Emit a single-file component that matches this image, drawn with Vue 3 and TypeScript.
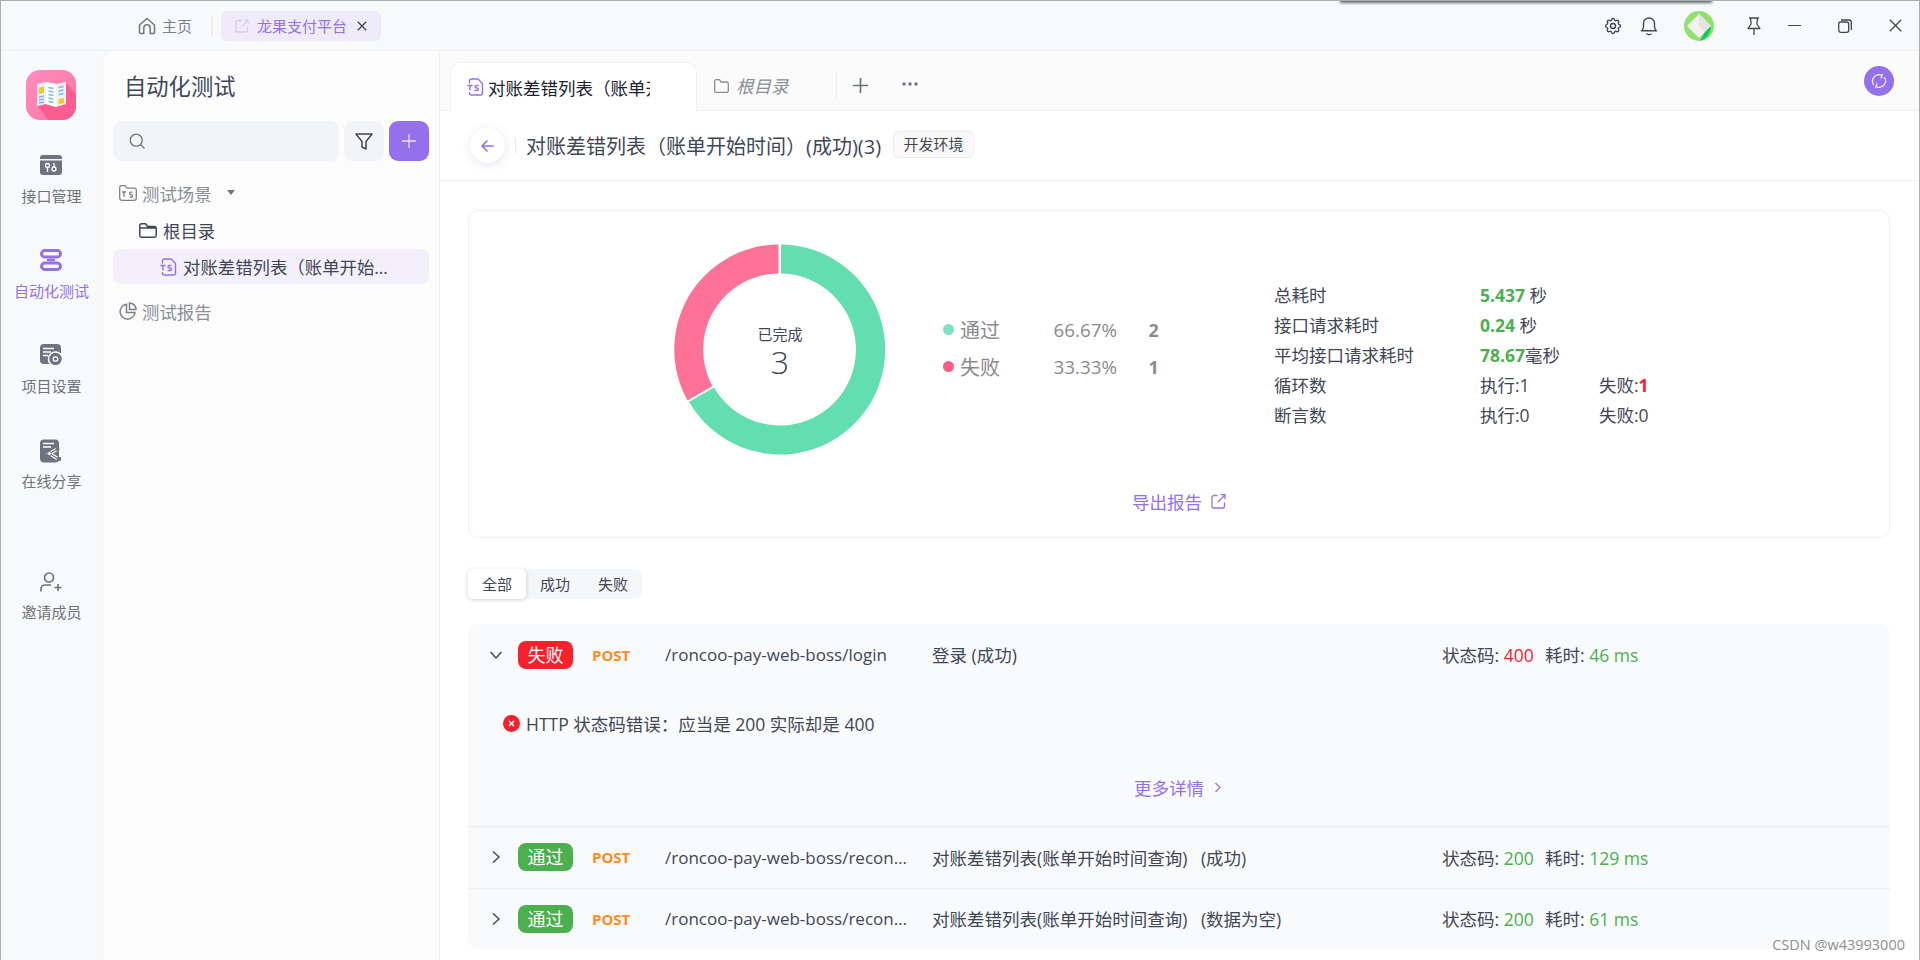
<script setup lang="ts">
interface ApiRow {
  state: string
  ok: boolean
  path: string
  name: string
  code: number
  time: string
}

const rows: ApiRow[] = [
  { state: '通过', ok: true, path: '/roncoo-pay-web-boss/reconciliation/list', name: '对账差错列表(账单开始时间查询)   (成功)', code: 200, time: '129 ms' },
  { state: '通过', ok: true, path: '/roncoo-pay-web-boss/reconciliation/list', name: '对账差错列表(账单开始时间查询)   (数据为空)', code: 200, time: '61 ms' },
]

const filters = ['全部', '成功', '失败']
</script>

<template>
  <div class="app">
    <div class="window-shadow"></div>

    <header class="titlebar">
      <div class="home">
        <svg width="18" height="18" viewBox="0 0 18 18" fill="none" stroke="#6f7580" stroke-width="1.5" stroke-linejoin="round">
          <path d="M1.500 8 9 1.500 16.500 8v7.500a1 1 0 0 1-1 1H12.200V11a3.200 3.200 0 0 0-6.400 0v5.500H2.500a1 1 0 0 1-1-1z" />
        </svg>
        <span>主页</span>
      </div>
      <i class="title-sep"></i>
      <div class="project-tab">
        <svg width="14" height="14" viewBox="0 0 14 14" fill="none" stroke="#d5d3e2" stroke-width="1.400">
          <path d="M7 1.500H3a2 2 0 0 0-2 2V11a2 2 0 0 0 2 2h7.500a2 2 0 0 0 2-2V7.500" />
          <path d="M7 7.500 13 1.500M9.500 1h3.500v3.500" />
        </svg>
        <span class="project-name">龙果支付平台</span>
        <svg class="project-close" width="10" height="10" viewBox="0 0 10 10" stroke="#3f4757" stroke-width="1.300">
          <path d="M.8.8l8.400 8.400M9.200.8.800 9.200" />
        </svg>
      </div>

      <div class="title-actions">
        <svg class="tool" width="20" height="20" viewBox="0 0 24 24" fill="none" stroke="#3f4757" stroke-width="1.700" stroke-linejoin="round">
          <path d="M10.325 4.317c.426-1.756 2.924-1.756 3.350 0a1.724 1.724 0 0 0 2.573 1.066c1.543-.94 3.310.826 2.370 2.370a1.724 1.724 0 0 0 1.065 2.572c1.756.426 1.756 2.924 0 3.350a1.724 1.724 0 0 0-1.066 2.573c.94 1.543-.826 3.310-2.370 2.370a1.724 1.724 0 0 0-2.572 1.065c-.426 1.756-2.924 1.756-3.350 0a1.724 1.724 0 0 0-2.573-1.066c-1.543.94-3.310-.826-2.370-2.370a1.724 1.724 0 0 0-1.065-2.572c-1.756-.426-1.756-2.924 0-3.350a1.724 1.724 0 0 0 1.066-2.573c-.94-1.543.826-3.310 2.370-2.370 1 .608 2.296.07 2.572-1.065z" />
          <circle cx="12" cy="12" r="3" />
        </svg>
        <svg class="tool bell" width="18" height="20" viewBox="0 0 18 20" fill="none" stroke="#3f4757" stroke-width="1.400" stroke-linecap="round" stroke-linejoin="round">
          <path d="M1.500 14.800c1.500-1.200 2-2.500 2-4.300V7.500a5.500 5.500 0 0 1 11 0v3c0 1.800.5 3.100 2 4.300z" />
          <path d="M6.800 18c1.300.8 3.100.8 4.400 0" />
        </svg>
        <svg class="avatar" width="30" height="30" viewBox="0 0 30 30">
          <circle cx="15" cy="15" r="15" fill="#8fe26f" />
          <path d="M15 3 27 15 15 27 3 15z" fill="#f4f2f0" />
          <path d="M15 3 27 15 21 21 15 15z" fill="#e6e2df" />
          <path d="M27 15A15 15 0 0 1 16 29.900L21 21z" fill="#0cc66a" />
        </svg>
        <svg class="win pin" width="14" height="18" viewBox="0 0 14 18" fill="none" stroke="#3f4757" stroke-width="1.300" stroke-linejoin="round">
          <path d="M2 1h10M3.500 1l.6 6L1 11.500h12L9.900 7l.6-6M7 11.500V18" />
        </svg>
        <i class="win minimize"></i>
        <svg class="win restore" width="14" height="14" viewBox="0 0 14 14" fill="none" stroke="#3f4757" stroke-width="1.300">
          <rect x=".7" y="3" width="10" height="10.300" rx="2" />
          <path d="M3 1h8a2.300 2.300 0 0 1 2.300 2.300V11" />
        </svg>
        <svg class="win close" width="13" height="13" viewBox="0 0 13 13" stroke="#3f4757" stroke-width="1.300">
          <path d="M.8.8l11.400 11.400M12.200.8.800 12.200" />
        </svg>
      </div>
    </header>

    <div class="body">
      <nav class="rail">
        <svg class="logo" width="50" height="50" viewBox="0 0 50 50">
          <defs>
            <linearGradient id="logo-bg" x1="0" y1="0" x2="1" y2="1">
              <stop offset="0" stop-color="#ff8dbd" />
              <stop offset="1" stop-color="#ff74a8" />
            </linearGradient>
          </defs>
          <rect width="50" height="50" rx="14" fill="url(#logo-bg)" />
          <path d="M12 36 22 50h14a14 14 0 0 0 14-14V24L40 13z" fill="#fb5d90" />
          <path d="M11 14 20 12 30 14 40 12V34L30 37 20 34 11 36z" fill="#f0f1f5" />
          <path d="M20 12v22l10 3V14z" fill="#fff" />
          <path d="M13 17.500 18 16.500V23L13 24z" fill="#f7c630" />
          <path d="M32.500 29 38 28V33L32.500 34.500z" fill="#f7c630" />
          <path d="M13 27l5-1M13 30l5-1M13 33l5-1M22.500 17.500l5 1M22.500 21l5 1M22.500 24.500l5 1M22.500 28l5 1M22.500 31.500l5 1M32.500 17.500l5-1M32.500 21l5-1M32.500 24.500l5-1" stroke="#7fb4ee" stroke-width="1.500" />
        </svg>

        <a class="nav-item">
          <svg width="22" height="22" viewBox="0 0 22 22">
            <path d="M0 4a3 3 0 0 1 3-3h16a3 3 0 0 1 3 3v1H0z" fill="#6d737f" />
            <path d="M0 6.500h22V18a3 3 0 0 1-3 3H3a3 3 0 0 1-3-3z" fill="#6d737f" />
            <circle cx="7.500" cy="11.500" r="2" fill="none" stroke="#fff" stroke-width="1.300" />
            <circle cx="14" cy="15" r="2" fill="none" stroke="#fff" stroke-width="1.300" />
            <path d="M7.500 13.500V18M14 9v4" stroke="#fff" stroke-width="1.300" />
          </svg>
          <span>接口管理</span>
        </a>
        <a class="nav-item active">
          <svg width="22" height="22" viewBox="0 0 22 22" fill="none" stroke="#9570ec" stroke-width="3">
            <rect x="1.500" y="1.500" width="19" height="6.500" rx="3.250" />
            <rect x="1.500" y="14" width="19" height="6.500" rx="3.250" />
            <path d="M6 8h10M6 14h10" stroke-width="2" />
            <path d="M7 11h8" stroke-width="2.500" />
          </svg>
          <span>自动化测试</span>
        </a>
        <a class="nav-item">
          <svg width="22" height="22" viewBox="0 0 22 22">
            <rect width="21" height="20" rx="4" fill="#6d737f" />
            <path d="M3 4.500h11M3 8h8M3 11.500h5" stroke="#fff" stroke-width="1.500" />
            <circle cx="15.500" cy="15" r="7" fill="#6d737f" stroke="#fff" stroke-width="1.500" />
            <circle cx="15.500" cy="15" r="2.200" fill="none" stroke="#fff" stroke-width="1.300" />
          </svg>
          <span>项目设置</span>
        </a>
        <a class="nav-item share">
          <svg width="22" height="24" viewBox="0 0 22 24">
            <rect y=".5" width="19" height="23" rx="4" fill="#6d737f" />
            <path d="M3 4.500h11M3 8h8" stroke="#fff" stroke-width="1.500" />
            <path d="M17.500 10 9.500 14.500l8 5" fill="none" stroke="#fff" stroke-width="3.500" />
            <path d="M17.500 10 9.500 14.500l8 5" fill="none" stroke="#6d737f" stroke-width="1.300" />
            <circle cx="17.500" cy="10" r="2" fill="#6d737f" />
            <circle cx="9.500" cy="14.500" r="2" fill="#fff" stroke="#6d737f" />
            <circle cx="19" cy="20" r="2.300" fill="#6d737f" />
          </svg>
          <span>在线分享</span>
        </a>
        <a class="nav-item invite">
          <svg width="22" height="20" viewBox="0 0 22 20" fill="none" stroke="#6d737f" stroke-width="1.700">
            <circle cx="9" cy="5.500" r="4.500" />
            <path d="M1 19.500V17a4 4 0 0 1 4-4h6M14.500 15.500h7M18 12v7" />
          </svg>
          <span>邀请成员</span>
        </a>
      </nav>

      <aside class="sidebar">
        <h2 class="side-title">自动化测试</h2>
        <div class="side-tools">
          <div class="search">
            <svg width="16" height="16" viewBox="0 0 16 16" fill="none" stroke="#6d737f" stroke-width="1.300" stroke-linecap="round">
              <circle cx="7.200" cy="7.200" r="6" />
              <path d="M12 12l3 3" />
            </svg>
          </div>
          <button class="tool-btn">
            <svg width="18" height="17" viewBox="0 0 18 17" fill="none" stroke="#3f4757" stroke-width="1.500" stroke-linejoin="round">
              <path d="M1 1h16l-6 7.500V16l-4-2V8.500z" />
            </svg>
          </button>
          <button class="tool-btn add">
            <svg width="14" height="14" viewBox="0 0 14 14" stroke="#e9e1fb" stroke-width="1.300">
              <path d="M7 0v14M0 7h14" />
            </svg>
          </button>
        </div>

        <div class="tree-head">
          <svg width="18" height="16" viewBox="0 0 18 16" fill="none" stroke="#7b808b" stroke-width="1.300">
            <path d="M.7 13V2.500A1.800 1.800 0 0 1 2.500.7H6l2 2.500h7.500a1.800 1.800 0 0 1 1.800 1.800v8a2.300 2.300 0 0 1-2.300 2.300H3A2.300 2.300 0 0 1 .7 13z" />
            <path d="M3 7h4M5 7v5M13.500 7.200h-1.700a1.200 1.200 0 0 0 0 2.400h.6a1.200 1.200 0 0 1 0 2.400H10.500" />
          </svg>
          <span>测试场景</span>
          <i class="caret"></i>
        </div>
        <div class="tree-root">
          <svg width="18" height="15" viewBox="0 0 18 15" fill="none" stroke="#3f4757" stroke-width="1.500">
            <path d="M.8 12.500V2.500A1.700 1.700 0 0 1 2.500.8H6.500L8.500 3.500H15.500a1.700 1.700 0 0 1 1.700 1.700v7.300a1.700 1.700 0 0 1-1.700 1.700h-13A1.700 1.700 0 0 1 .8 12.500zM.8 5h16.400" />
          </svg>
          <span>根目录</span>
        </div>
        <div class="tree-file">
          <svg width="17" height="18" viewBox="0 0 17 18" fill="none" stroke="#9570ec" stroke-width="1.400">
            <path d="M2.500 5.500V3A2 2 0 0 1 4.500 1H11l4.500 4.500V15a2 2 0 0 1-2 2h-9a2 2 0 0 1-2-2v-1" />
            <path d="M.5 7.500h5M3 7.500V12.500M11.500 7.500H9.300a1.200 1.200 0 0 0 0 2.500h.9a1.200 1.200 0 0 1 0 2.500H7.500" />
          </svg>
          <span class="file-name">对账差错列表（账单开始时间）(成功)</span>
        </div>
        <div class="tree-head report">
          <svg width="18" height="18" viewBox="0 0 18 18" fill="none" stroke="#7b808b" stroke-width="1.500">
            <path d="M7.500 2.200A7.500 7.500 0 1 0 16 10.500H7.500z" />
            <path d="M10.500 1v6.500H17A6.500 6.500 0 0 0 10.500 1z" />
          </svg>
          <span>测试报告</span>
        </div>
      </aside>

      <main class="main">
        <div class="tabs">
          <div class="tab current">
            <svg width="17" height="18" viewBox="0 0 17 18" fill="none" stroke="#9570ec" stroke-width="1.400">
              <path d="M2.500 5.500V3A2 2 0 0 1 4.500 1H11l4.500 4.500V15a2 2 0 0 1-2 2h-9a2 2 0 0 1-2-2v-1" />
              <path d="M.5 7.500h5M3 7.500V12.500M11.500 7.500H9.300a1.200 1.200 0 0 0 0 2.500h.9a1.200 1.200 0 0 1 0 2.500H7.500" />
            </svg>
            <span class="tab-text">对账差错列表（账单开始时间）(成功)</span>
          </div>
          <div class="tab other">
            <svg width="15" height="14" viewBox="0 0 15 14" fill="none" stroke="#8a8f99" stroke-width="1.300">
              <path d="M.7 12V2.200A1.500 1.500 0 0 1 2.200.7H5.500L7 3h6a1.500 1.500 0 0 1 1.300 1.500V12a1.300 1.300 0 0 1-1.300 1.300H2A1.300 1.300 0 0 1 .7 12z" />
            </svg>
            <em>根目录</em>
          </div>
          <i class="tab-sep"></i>
          <svg class="tab-plus" width="15" height="15" viewBox="0 0 15 15" stroke="#6d737f" stroke-width="1.700">
            <path d="M7.500 0v15M0 7.500h15" />
          </svg>
          <svg class="tab-more" width="16" height="4" viewBox="0 0 16 4" fill="#6d737f">
            <circle cx="2" cy="2" r="1.700" />
            <circle cx="8" cy="2" r="1.700" />
            <circle cx="14" cy="2" r="1.700" />
          </svg>
          <button class="sync">
            <svg width="16" height="16" viewBox="0 0 16 16" fill="none" stroke="#fff" stroke-width="1.100">
              <path d="M2.800 11.800A6.300 6.300 0 0 1 10.500 2.300M13.200 4.200A6.300 6.300 0 0 1 5.500 13.700" />
              <path d="M11.500 1 10 5.500M4.500 15 6 10.500" />
            </svg>
          </button>
        </div>

        <div class="page-head">
          <button class="back">
            <svg width="13" height="12" viewBox="0 0 13 12" fill="none" stroke="#9570ec" stroke-width="1.700" stroke-linecap="round" stroke-linejoin="round">
              <path d="M12 6H1.500M6 1 1 6l5 5" />
            </svg>
          </button>
          <i class="head-sep"></i>
          <h1 class="page-title">对账差错列表（账单开始时间）(成功)(3)</h1>
          <span class="env">开发环境</span>
        </div>

        <section class="summary">
          <div class="summary-top">
            <div class="donut">
              <svg width="212" height="212" viewBox="0 0 212 212">
                <path d="M107 1A105 105 0 1 1 15.100 158.300L40.100 144A76 76 0 1 0 107 30z" fill="#62deb0" transform="translate(0 .5)" />
                <path d="M104.500 1A105 105 0 0 0 13.500 157L38.500 142.500A76 76 0 0 1 104.500 30z" fill="#fd7296" transform="translate(0 .5)" />
              </svg>
              <div class="donut-label">
                <span>已完成</span>
                <b>3</b>
              </div>
            </div>

            <div class="legend">
              <div class="legend-row">
                <i class="dot pass"></i><span class="legend-name">通过</span>
                <span class="legend-pct">66.67%</span><b class="legend-num">2</b>
              </div>
              <div class="legend-row">
                <i class="dot fail"></i><span class="legend-name">失败</span>
                <span class="legend-pct">33.33%</span><b class="legend-num">1</b>
              </div>
            </div>

            <div class="stats">
              <span>总耗时</span><span class="wide"><b class="good">5.437</b> 秒</span>
              <span>接口请求耗时</span><span class="wide"><b class="good">0.24</b> 秒</span>
              <span>平均接口请求耗时</span><span class="wide"><b class="good">78.67</b>毫秒</span>
              <span>循环数</span><span>执行:1</span><span>失败:<b class="bad">1</b></span>
              <span>断言数</span><span>执行:0</span><span>失败:0</span>
            </div>
          </div>

          <a class="export">
            导出报告
            <svg width="15" height="15" viewBox="0 0 15 15" fill="none" stroke="#9570ec" stroke-width="1.300">
              <path d="M6.500 1.500H3A2 2 0 0 0 1 3.500V12a2 2 0 0 0 2 2h8.500a2 2 0 0 0 2-2V8.500" />
              <path d="M7 8l7-7M9.500.7H14v4.500" />
            </svg>
          </a>
        </section>

        <div class="filter">
          <span v-for="(f, i) in filters" :key="f" class="filter-item" :class="{ on: i === 0 }">{{ f }}</span>
        </div>

        <section class="list">
          <div class="api-block">
            <div class="api-row first">
              <svg class="arrow" width="14" height="14" viewBox="0 0 14 14" fill="none" stroke="#3f4757" stroke-width="1.400">
                <path d="M1.500 4 7 10l5.500-6" />
              </svg>
              <span class="badge fail-badge">失败</span>
              <span class="method">POST</span>
              <span class="path">/roncoo-pay-web-boss/login</span>
              <span class="name">登录 (成功)</span>
              <span class="meta">状态码: <em class="bad">400</em></span>
              <span class="meta time">耗时: <em class="good">46 ms</em></span>
            </div>
            <div class="error-line">
              <svg width="17" height="17" viewBox="0 0 17 17">
                <circle cx="8.500" cy="8.500" r="8.500" fill="#f5222d" />
                <path d="M6 6l5 5M11 6l-5 5" stroke="#fff" stroke-width="1.500" />
              </svg>
              <span>HTTP 状态码错误：应当是 200 实际却是 400</span>
            </div>
            <a class="more">
              更多详情
              <svg width="7" height="11" viewBox="0 0 7 11" fill="none" stroke="#9570ec" stroke-width="1.200">
                <path d="M1.500 1 6 5.500 1.500 10" />
              </svg>
            </a>
          </div>

          <div v-for="row in rows" :key="row.name" class="api-row line">
            <svg class="arrow" width="14" height="14" viewBox="0 0 14 14" fill="none" stroke="#3f4757" stroke-width="1.400">
              <path d="M4 1.500 10 7l-6 5.500" />
            </svg>
            <span class="badge pass-badge">{{ row.state }}</span>
            <span class="method">POST</span>
            <span class="path">{{ row.path }}</span>
            <span class="name">{{ row.name }}</span>
            <span class="meta">状态码: <em class="good">{{ row.code }}</em></span>
            <span class="meta time">耗时: <em class="good">{{ row.time }}</em></span>
          </div>
        </section>
      </main>
    </div>

    <span class="watermark">CSDN @w43993000</span>
  </div>
</template>

<style scoped>
.app {
  position: relative;
  box-sizing: border-box;
  width: 1920px;
  height: 960px;
  overflow: hidden;
  display: flex;
  flex-direction: column;
  border: 1px solid #acadb0;
  border-bottom: 0;
  background: #f8f9fb;
  color: #3f4757;
  font-family: "Open Sans", "Noto Sans CJK SC", sans-serif;
}

.app svg {
  flex: none;
}

.window-shadow {
  position: absolute;
  top: -3px;
  left: 1340px;
  width: 370px;
  height: 3px;
  box-shadow: 0 1px 3px 1px rgba(40, 40, 40, 0.7);
}

.titlebar {
  flex: none;
  height: 49px;
  display: flex;
  align-items: center;
  padding-left: 137px;
  border-bottom: 1px solid #f0f1f4;
}

.home {
  display: flex;
  align-items: center;
  gap: 6px;
  width: 73px;
  font-size: 15px;
  color: #7b808b;
}

.title-sep {
  width: 2px;
  height: 20px;
  background: #eceef1;
}

.project-tab {
  display: flex;
  align-items: center;
  width: 160px;
  height: 30px;
  margin-left: 8px;
  padding-left: 14px;
  box-sizing: border-box;
  background: #efebfa;
  border-radius: 6px;
}

.project-name {
  margin-left: 8px;
  font-size: 15px;
  color: #9570ec;
}

.project-close {
  margin-left: 10px;
}

.title-actions {
  margin-left: auto;
  display: flex;
  align-items: center;
  height: 100%;
  padding-right: 17px;
}

.bell {
  margin-left: 17px;
}

.avatar {
  margin-left: 26px;
}

.pin {
  margin-left: 33px;
}

.minimize {
  width: 13px;
  height: 1.5px;
  margin-left: 27px;
  background: #3f4757;
}

.restore {
  margin-left: 37px;
}

.close {
  margin-left: 37px;
}

.body {
  flex: 1;
  display: flex;
  min-height: 0;
}

.rail {
  flex: none;
  width: 101px;
  display: flex;
  flex-direction: column;
  align-items: center;
  padding-top: 19px;
}

.logo {
  margin: 0 2px 34px 0;
}

.nav-item {
  display: flex;
  flex-direction: column;
  align-items: center;
  gap: 9px;
  height: 95px;
  font-size: 15px;
  color: #6d737f;
}

.nav-item.active {
  color: #9570ec;
}

.nav-item.share {
  gap: 7px;
}

.nav-item.invite {
  margin-top: 38px;
}

.sidebar {
  flex: none;
  box-sizing: border-box;
  width: 338px;
  padding: 0 10px;
  background: #fcfcfd;
  border-right: 1px solid #f1f2f5;
  border-left: 1px solid #f3f4f7;
  border-top-left-radius: 12px;
}

.side-title {
  margin: 0;
  padding-left: 11px;
  height: 70px;
  line-height: 72px;
  font-size: 22.300px;
  font-weight: 400;
}

.side-tools {
  display: flex;
  gap: 5px;
  height: 40px;
}

.search {
  flex: 1;
  display: flex;
  align-items: center;
  padding-left: 16px;
  background: #f3f4f8;
  border-radius: 9px;
}

.tool-btn {
  display: flex;
  align-items: center;
  justify-content: center;
  width: 40px;
  padding: 0;
  border: 0;
  border-radius: 9px;
  background: #f3f4f8;
}

.tool-btn.add {
  background: #9570ec;
}

.tree-head {
  display: flex;
  align-items: center;
  gap: 5px;
  height: 36px;
  margin-top: 14px;
  padding-left: 6px;
  font-size: 17.400px;
  color: #8a8f99;
}

.caret {
  width: 0;
  height: 0;
  margin-left: 10px;
  margin-bottom: 2px;
  border: 4px solid transparent;
  border-top: 5px solid #6d737f;
  border-bottom: 0;
}

.tree-root {
  display: flex;
  align-items: center;
  gap: 6px;
  height: 38px;
  padding-left: 26px;
  font-size: 17.400px;
}

.tree-file {
  display: flex;
  align-items: center;
  gap: 6px;
  height: 35px;
  padding: 0 24px 0 47px;
  background: #f3f0fb;
  border-radius: 7px;
  font-size: 17.400px;
}

.file-name {
  min-width: 0;
  overflow: hidden;
  white-space: nowrap;
  text-overflow: ellipsis;
}

.tree-head.report {
  margin-top: 9px;
}

.main {
  flex: 1;
  min-width: 0;
  background: #fff;
}

.tabs {
  display: flex;
  align-items: flex-end;
  height: 60px;
  padding-left: 10px;
  box-sizing: border-box;
  background: #fbfbfc;
  border-bottom: 1px solid #f0f1f4;
}

.tab {
  display: flex;
  align-items: center;
  box-sizing: border-box;
  height: 49px;
}

.tab.current {
  width: 247px;
  margin-bottom: -1px;
  padding: 0 46px 0 16px;
  gap: 4px;
  background: #fff;
  border: 1px solid #f0f1f4;
  border-bottom: 0;
  border-radius: 10px 10px 0 0;
  font-size: 17.500px;
  color: #1c2330;
}

.tab-text {
  overflow: hidden;
  white-space: nowrap;
}

.tab.other {
  gap: 7px;
  width: 139px;
  padding-left: 17px;
  font-size: 17.500px;
  color: #8a8f99;
}

.tab.other em {
  font-style: italic;
}

.tab-sep {
  align-self: center;
  width: 1px;
  height: 30px;
  margin-top: 11px;
  background: #f0f1f4;
}

.tab-plus {
  align-self: center;
  margin: 10px 0 0 16px;
}

.tab-more {
  align-self: center;
  margin: 6px 0 0 34px;
}

.sync {
  align-self: center;
  display: flex;
  align-items: center;
  justify-content: center;
  width: 30px;
  height: 30px;
  margin: 0 25px 0 auto;
  padding: 0;
  border: 0;
  border-radius: 50%;
  background: #9570ec;
}

.page-head {
  display: flex;
  align-items: center;
  box-sizing: border-box;
  height: 70px;
  padding-left: 30px;
  border-bottom: 1px solid #f0f1f4;
}

.back {
  display: flex;
  align-items: center;
  justify-content: center;
  width: 35px;
  height: 35px;
  padding: 0;
  border: 0;
  border-radius: 50%;
  background: #fff;
  box-shadow: 0 2px 8px rgba(120, 110, 160, 0.18);
}

.head-sep {
  width: 1px;
  height: 16px;
  margin-left: 10px;
  background: #e8e9ee;
}

.page-title {
  margin: 0 0 0 10px;
  font-size: 20px;
  font-weight: 400;
  white-space: nowrap;
}

.env {
  margin: 0 0 3px 12px;
  padding: 0 9.500px;
  line-height: 25px;
  font-size: 15px;
  background: #f9f9fa;
  border: 1px solid #eceef1;
  border-radius: 5px;
}

.summary {
  box-sizing: border-box;
  height: 328px;
  margin: 29px 29px 0 28px;
  border: 1px solid #f0f1f4;
  border-radius: 10px;
  display: flex;
  flex-direction: column;
  align-items: center;
}

.summary-top {
  align-self: stretch;
  display: flex;
  align-items: flex-start;
  padding: 32px 0 0 205px;
  height: 270px;
  box-sizing: border-box;
}

.donut {
  position: relative;
  flex: none;
  width: 212px;
  height: 212px;
}

.donut-label {
  position: absolute;
  inset: 0;
  display: flex;
  flex-direction: column;
  align-items: center;
  justify-content: center;
  font-size: 15px;
  padding-top: 4px;
  box-sizing: border-box;
}

.donut-label b {
  font-size: 32px;
  font-weight: 300;
  line-height: 36px;
}

.legend {
  flex: none;
  width: 216px;
  margin: 68px 0 0 57px;
  color: #8a8a8f;
}

.legend-row {
  display: flex;
  align-items: center;
  height: 37px;
}

.dot {
  flex: none;
  width: 11px;
  height: 11px;
  border-radius: 50%;
  margin-right: 6px;
}

.dot.pass {
  background: #7fe2c1;
}

.dot.fail {
  background: #fb5c85;
}

.legend-name {
  flex: none;
  width: 93.500px;
  font-size: 20px;
}

.legend-pct {
  flex: none;
  width: 95px;
  font-size: 18.800px;
}

.legend-num {
  flex: none;
  font-size: 18px;
  width: 10px;
  text-align: right;
}

.stats {
  display: grid;
  grid-template-columns: 206px 119px auto;
  grid-auto-rows: 30px;
  align-items: center;
  margin: 36px 0 0 115px;
  font-size: 17.500px;
  white-space: nowrap;
}

.stats .wide {
  grid-column: span 2;
}

.good {
  color: #4caf50;
}

.bad {
  color: #f5222d;
}

.export {
  display: flex;
  align-items: center;
  gap: 9px;
  margin-top: 8px;
  font-size: 17.500px;
  color: #9570ec;
}

.filter {
  display: flex;
  width: 174px;
  height: 30px;
  margin: 31px 0 0 28px;
  background: #f4f6f7;
  border-radius: 6px;
}

.filter-item {
  width: 58px;
  line-height: 30px;
  text-align: center;
  font-size: 15px;
}

.filter-item.on {
  background: #fff;
  border-radius: 5px;
  box-shadow: 0 1px 4px rgba(60, 60, 70, 0.22);
}

.list {
  box-sizing: border-box;
  height: 325px;
  margin: 25px 29px 0 28px;
  background: #f9fafb;
  border-radius: 10px;
}

.api-block {
  height: 202px;
}

.api-row {
  display: flex;
  align-items: center;
  font-size: 17.500px;
  white-space: nowrap;
}

.api-row.first {
  height: 61px;
}

.api-row.line {
  box-sizing: border-box;
  height: 61.500px;
  border-top: 1px solid #eceef0;
}

.arrow {
  margin-left: 21px;
}

.badge {
  width: 55px;
  margin-left: 15px;
  line-height: 28px;
  text-align: center;
  border-radius: 8px;
  font-size: 18px;
  color: #fff;
}

.fail-badge {
  background: #f5222d;
}

.pass-badge {
  background: #4caf50;
}

.method {
  width: 73px;
  margin-left: 19px;
  font-size: 15px;
  font-weight: 700;
  color: #fd8c27;
}

.path {
  width: 243px;
  margin-right: 24px;
  overflow: hidden;
  text-overflow: ellipsis;
  font-size: 17px;
}

.name {
  width: 510px;
  white-space: pre;
}

.meta {
  width: 103px;
}

.meta em {
  font-style: normal;
}

.error-line {
  display: flex;
  align-items: center;
  gap: 6px;
  height: 34px;
  margin-top: 21px;
  padding-left: 35px;
  font-size: 17.500px;
}

.more {
  display: flex;
  align-items: center;
  gap: 10px;
  margin: 35px 0 0 666px;
  font-size: 17.500px;
  color: #9570ec;
}

.watermark {
  position: absolute;
  right: 14px;
  bottom: 6px;
  font-size: 14.500px;
  color: #8f8f8f;
  background: rgba(255, 255, 255, 0.4);
}
</style>
